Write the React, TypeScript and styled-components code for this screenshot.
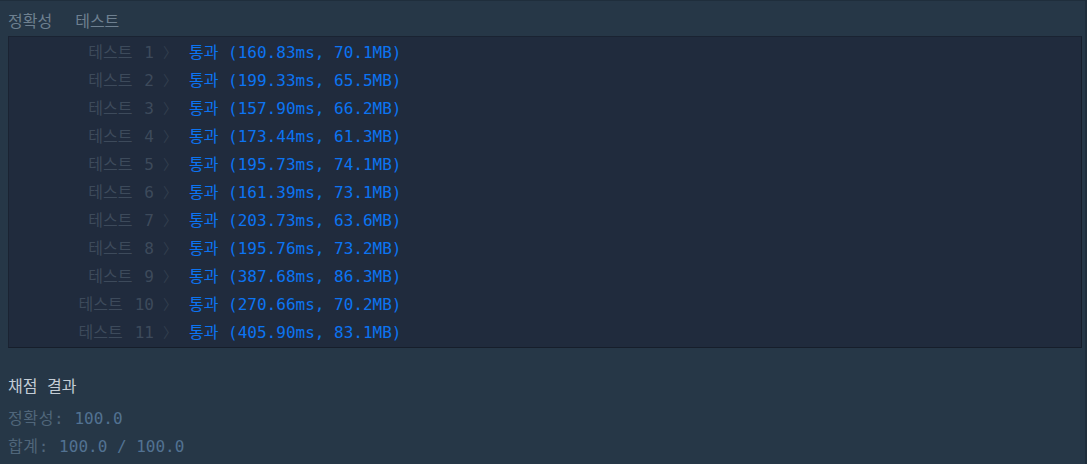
import styled, { createGlobalStyle } from "styled-components";

const GlobalStyle = createGlobalStyle`
  html, body {
    margin: 0;
    padding: 0;
    background: #263747;
  }
`;

const results = [
  { time: "160.83", mem: "70.1" },
  { time: "199.33", mem: "65.5" },
  { time: "157.90", mem: "66.2" },
  { time: "173.44", mem: "61.3" },
  { time: "195.73", mem: "74.1" },
  { time: "161.39", mem: "73.1" },
  { time: "203.73", mem: "63.6" },
  { time: "195.76", mem: "73.2" },
  { time: "387.68", mem: "86.3" },
  { time: "270.66", mem: "70.2" },
  { time: "405.90", mem: "83.1" },
];

const App = () => {
  return (
    <Console>
      <GlobalStyle />
      <SectionTitle>
        정확성<Gap />테스트
      </SectionTitle>
      <ResultBox>
        {results.map((r, i) => (
          <Row key={i}>
            <Label>
              테스트<Space />
              {i + 1}
            </Label>
            <Chevron>〉</Chevron>
            <Passed>
              통과 ({r.time}ms, {r.mem}MB)
            </Passed>
          </Row>
        ))}
      </ResultBox>
      <Summary>
        <SummaryTitle>채점 결과</SummaryTitle>
        <SummaryLine>
          <SummaryKey>정확성: </SummaryKey>
          <Score>100.0</Score>
        </SummaryLine>
        <SummaryLine>
          <SummaryKey>합계: </SummaryKey>
          <Score>100.0 / 100.0</Score>
        </SummaryLine>
      </Summary>
    </Console>
  );
};

const Console = styled.div`
  box-sizing: border-box;
  width: 1087px;
  height: 464px;
  overflow: hidden;
  padding: 7px 3px 0 8px;
  background: #263747;
  border-top: 1px solid #1f2e3c;
  border-right: 2px solid #1f2e3c;
  font-family: "DejaVu Sans Mono", "Noto Sans CJK KR", monospace;
  font-size: 16px;
`;

const SectionTitle = styled.div`
  height: 28px;
  line-height: 27px;
  color: #6e8090;
  white-space: pre;
`;

const Gap = styled.span`
  display: inline-block;
  width: 23px;
`;

const ResultBox = styled.div`
  background: #202b3d;
  border: 1px solid #1a2332;
  border-right-color: #161e2b;
  border-bottom-color: #161e2b;
  padding: 0 0 2px;
`;

const Row = styled.div`
  display: flex;
  align-items: center;
  height: 28px;
  white-space: pre;
`;

const Label = styled.span`
  width: 145px;
  text-align: right;
  color: #3d4a5b;
`;

const Space = styled.span`
  display: inline-block;
  width: 12px;
`;

const Chevron = styled.span`
  width: 35px;
  padding-left: 9px;
  box-sizing: border-box;
  color: #323e4e;
  font-family: "Noto Sans CJK KR", sans-serif;
  font-size: 14px;
`;

const Passed = styled.span`
  color: #0c74f2;
`;

const Summary = styled.div`
  padding-top: 26px;
`;

const SummaryTitle = styled.div`
  height: 32px;
  line-height: 26px;
  color: #c3ccd5;
`;

const SummaryLine = styled.div`
  height: 28px;
  line-height: 26px;
  color: #50667a;
  white-space: pre;
`;

const SummaryKey = styled.span`
  letter-spacing: 0.6px;
`;

const Score = styled.span`
  color: #527292;
`;

export default App;
